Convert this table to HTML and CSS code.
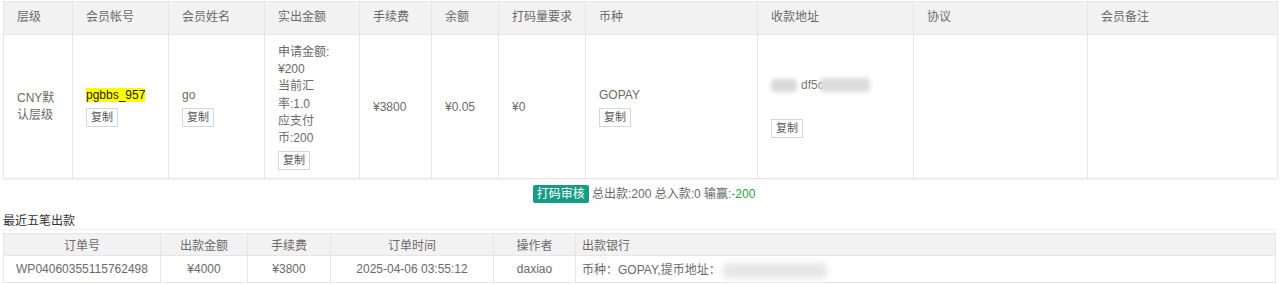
FILE: index.html
```html
<!DOCTYPE html>
<html lang="zh-CN">
<head>
<meta charset="utf-8">
<title>出款详情</title>
<link rel="stylesheet" href="styles.css">
</head>
<body>
<div class="page">
  <table class="detail">
    <colgroup>
      <col class="w69"><col class="w96"><col class="w96"><col class="w95"><col class="w72"><col class="w67"><col class="w87"><col class="w172"><col class="w156"><col class="w174"><col class="w190">
    </colgroup>
    <thead>
      <tr>
        <th>层级</th><th>会员帐号</th><th>会员姓名</th><th>实出金额</th><th>手续费</th><th>余额</th><th>打码量要求</th><th>币种</th><th>收款地址</th><th>协议</th><th>会员备注</th>
      </tr>
    </thead>
    <tbody>
      <tr>
        <td>CNY默<br>认层级</td>
        <td><span class="hl">pgbbs_957</span><br><button class="copy">复制</button></td>
        <td>go<br><button class="copy">复制</button></td>
        <td>申请金额:<br>¥200<br>当前汇<br>率:1.0<br>应支付<br>币:200<br><button class="copy">复制</button></td>
        <td>¥3800</td>
        <td>¥0.05</td>
        <td>¥0</td>
        <td>GOPAY<br><button class="copy">复制</button></td>
        <td><div class="addr"><span class="blob b1"></span>df5c<span class="blob b2"></span></div><button class="copy">复制</button></td>
        <td></td>
        <td></td>
      </tr>
    </tbody>
  </table>

  <div class="summary">
    <span class="badge">打码审核</span> 总出款:200 总入款:0 输赢:<span class="win">-200</span>
  </div>

  <div class="title">最近五笔出款</div>

  <table class="recent">
    <colgroup>
      <col class="w157"><col class="w87"><col class="w83"><col class="w163"><col class="w82"><col class="w700">
    </colgroup>
    <thead>
      <tr>
        <th>订单号</th><th>出款金额</th><th>手续费</th><th>订单时间</th><th>操作者</th><th class="left">出款银行</th>
      </tr>
    </thead>
    <tbody>
      <tr>
        <td>WP04060355115762498</td><td>¥4000</td><td>¥3800</td><td>2025-04-06 03:55:12</td><td>daxiao</td><td class="left">币种：GOPAY,提币地址：<span class="blob b3"></span></td>
      </tr>
    </tbody>
  </table>
</div>
</body>
</html>
```

FILE: styles.css
```css
html, body {
  margin: 0;
  padding: 0;
  background: #fff;
}
body {
  font-family: "Liberation Sans", Arial, "Noto Sans CJK SC", sans-serif;
  font-size: 12px;
  color: #6a6a6a;
}
.page {
  padding: 1px 3px 0 3px;
}
table {
  border-collapse: collapse;
  table-layout: fixed;
  width: 1273px;
}
.detail {
  border: 1px solid #e6e6e6;
  box-shadow: 0 1px 2px rgba(0,0,0,0.05);
}
.detail th, .detail td {
  border: 1px solid #e6e6e6;
  text-align: left;
  vertical-align: middle;
  padding: 0 13px;
  font-weight: normal;
  line-height: 17.2px;
}
.detail th {
  background: #f2f2f2;
  height: 32px;
  padding-top: 0;
  padding-bottom: 0;
}
.detail td {
  height: 126px;
  padding-top: 9px;
  padding-bottom: 8px;
}
.w69 { width: 69px; }
.w96 { width: 96px; }
.w95 { width: 95px; }
.w72 { width: 72px; }
.w67 { width: 67px; }
.w87 { width: 87px; }
.w172 { width: 172px; }
.w156 { width: 156px; }
.w174 { width: 174px; }
.w190 { width: 190px; }
.w157 { width: 157px; }
.w83 { width: 83px; }
.w163 { width: 163px; }
.w82 { width: 82px; }
.w700 { width: 700px; }

.hl {
  background: #ffff00;
  color: #222;
}
.copy {
  font-family: "Liberation Sans", Arial, "Noto Sans CJK SC", sans-serif;
  font-size: 11px;
  color: #555;
  background: #fff;
  border: 1px solid #d6d6d6;
  padding: 0 4px;
  line-height: 17px;
  height: 19px;
  margin-top: 4px;
  border-radius: 0;
  vertical-align: top;
}
.addr {
  margin-bottom: 21px;
  white-space: nowrap;
  color: #777;
}
.blob {
  display: inline-block;
  vertical-align: middle;
  background: #d9d9d9;
  filter: blur(2px);
  border-radius: 4px;
}
.b1 { width: 26px; height: 13px; margin-right: 4px; }
.b2 { width: 50px; height: 14px; margin-left: -4px; background: #dcdcdc; }
.b3 { width: 104px; height: 15px; background: #e6e6e6; filter: blur(3px); margin-left: 2px; }

.summary {
  text-align: center;
  padding-left: 8px;
  margin-top: 5px;
  height: 20px;
  line-height: 20px;
}
.badge {
  display: inline-block;
  background: #159c85;
  color: #fff;
  padding: 0 4px;
  line-height: 18px;
  border-radius: 2px;
  vertical-align: top;
  margin-top: 1px;
}
.win {
  color: #2ea043;
}
.title {
  color: #333;
  margin-top: 9px;
  line-height: 16px;
  padding-bottom: 0;
  border-bottom: 1px solid #f0f0f0;
  width: 1273px;
}
.recent {
  margin-top: 3px;
  border: 1px solid #e6e6e6;
}
.recent th, .recent td {
  border: 1px solid #e6e6e6;
  text-align: center;
  font-weight: normal;
  padding: 0 6px;
  white-space: nowrap;
}
.recent th {
  background: #f2f2f2;
  height: 21px;
}
.recent td {
  height: 26px;
}
.recent .left {
  text-align: left;
}
```
